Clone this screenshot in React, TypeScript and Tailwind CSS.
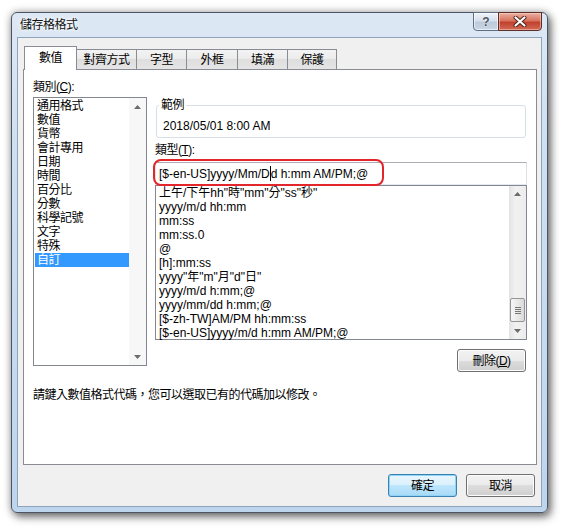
import { ReactElement } from 'react'

const categories = ['通用格式', '數值', '貨幣', '會計專用', '日期', '時間', '百分比', '分數', '科學記號', '文字', '特殊', '自訂']

const formats = [
  '上午/下午hh"時"mm"分"ss"秒"',
  'yyyy/m/d hh:mm',
  'mm:ss',
  'mm:ss.0',
  '@',
  '[h]:mm:ss',
  'yyyy"年"m"月"d"日"',
  'yyyy/m/d h:mm;@',
  'yyyy/mm/dd h:mm;@',
  '[$-zh-TW]AM/PM hh:mm:ss',
  '[$-en-US]yyyy/m/d h:mm AM/PM;@',
]

const tabs = [
  { label: '數值', w: 'w-[53px]' },
  { label: '對齊方式', w: 'w-[61px]' },
  { label: '字型', w: 'w-[51px]' },
  { label: '外框', w: 'w-[52px]' },
  { label: '填滿', w: 'w-[51px]' },
  { label: '保護', w: 'w-[50px]' },
]

function Arrow({ up }: { up?: boolean }): ReactElement {
  return (
    <svg width="7" height="4" viewBox="0 0 7 4">
      <path d={up ? 'M0 4 L3.5 0 L7 4 Z' : 'M0 0 L3.5 4 L7 0 Z'} fill="#6b6b6b" />
    </svg>
  )
}

function Button({ children, primary }: { children: React.ReactNode; primary?: boolean }): ReactElement {
  return (
    <div
      className={
        primary
          ? 'flex h-[23px] w-[69px] items-center justify-center rounded-[3px] border border-[#3c7fb1] bg-[linear-gradient(180deg,#eaf6fd_0%,#d9f0fc_50%,#bee6fd_50%,#a7d9f5_100%)] shadow-[inset_0_0_0_1px_#8fd3f7] tracking-[-0.5px]'
          : 'flex h-[23px] w-[69px] items-center justify-center rounded-[3px] border border-[#707070] bg-[linear-gradient(180deg,#f2f2f2_0%,#ebebeb_50%,#dddddd_50%,#cfcfcf_100%)] shadow-[inset_0_0_0_1px_#fcfcfc] tracking-[-0.5px]'
      }
    >
      {children}
    </div>
  )
}

function TitleBar(): ReactElement {
  return (
    <div className="flex h-[24px] items-center justify-between pl-[8px] pr-[5px]">
      <span className="text-[12px] tracking-[-0.5px] text-[#111] [text-shadow:0_0_5px_#fff,0_0_3px_#fff]">儲存格格式</span>
      <div className="-mt-px flex self-start">
        <div className="flex h-[19px] w-[26px] items-center justify-center rounded-bl-[4px] border border-[#5e6f84] bg-[linear-gradient(180deg,#eef3f8_0%,#d6e0eb_45%,#bccadb_55%,#c9d6e5_100%)] shadow-[inset_0_0_0_1px_rgba(255,255,255,0.6)]">
          <span className="text-[12px] font-bold leading-none text-[#4a5563] [text-shadow:0_0_2px_#fff]">?</span>
        </div>
        <div className="-ml-px flex h-[19px] w-[44px] items-center justify-center rounded-br-[4px] border border-[#5e2d26] bg-[linear-gradient(180deg,#eab1a3_0%,#d8735f_45%,#c0412d_55%,#d26a55_100%)] shadow-[inset_0_0_0_1px_rgba(255,220,210,0.5)]">
          <svg width="14" height="11" viewBox="0 0 14 11">
            <path d="M2.5 1.5 L11.5 9.5 M11.5 1.5 L2.5 9.5" stroke="#4a1f19" strokeWidth="4" strokeLinecap="round" />
            <path d="M2.5 1.5 L11.5 9.5 M11.5 1.5 L2.5 9.5" stroke="#ffffff" strokeWidth="2.2" strokeLinecap="round" />
          </svg>
        </div>
      </div>
    </div>
  )
}

function Tabs(): ReactElement {
  return (
    <div className="flex h-[23px] items-end pl-[1px]">
      {tabs.map((t, i) =>
        i === 0 ? (
          <div
            key={t.label}
            className="relative z-10 -mb-px flex h-[24px] w-[53px] items-center justify-center border border-b-0 border-[#898c95] bg-white pb-[1px] tracking-[-0.5px]"
          >
            {t.label}
          </div>
        ) : (
          <div
            key={t.label}
            className={`-ml-px flex h-[20px] ${t.w} items-center justify-center border border-b-0 border-[#898c95] bg-[linear-gradient(180deg,#f3f3f3_0%,#ebebeb_50%,#dedede_50%,#e5e5e5_100%)] tracking-[-0.5px]`}
          >
            {t.label}
          </div>
        ),
      )}
    </div>
  )
}

function CategoryList(): ReactElement {
  return (
    <div className="flex w-[114px] flex-col">
      <div className="h-[16px] leading-[16px] tracking-[-0.5px]">
        類別(<span className="underline">C</span>):
      </div>
      <div className="mt-[2px] flex h-[269px] border border-[#828790] bg-white">
        <div className="flex-1 pl-[1px] pt-[1px]">
          {categories.map((c) => (
            <div
              key={c}
              className={
                c === '自訂'
                  ? 'h-[14px] bg-[#3399ff] pl-[2px] leading-[14px] tracking-[-0.5px] text-white'
                  : 'h-[14px] pl-[2px] leading-[14px] tracking-[-0.5px]'
              }
            >
              {c}
            </div>
          ))}
        </div>
        <div className="flex w-[17px] flex-col justify-between bg-[#f7f7f7]">
          <div className="flex h-[17px] items-center justify-center">
            <Arrow up />
          </div>
          <div className="flex h-[17px] items-center justify-center">
            <Arrow />
          </div>
        </div>
      </div>
    </div>
  )
}

function FormatPane(): ReactElement {
  return (
    <div className="flex w-[372px] flex-col pt-[18px]">
      <fieldset className="mx-[1px] rounded-[3px] border border-[#d5dfe5] pl-[2px]">
        <legend className="px-[2px] leading-[16px] tracking-[-0.5px]">範例</legend>
        <div className="pb-[3px] pl-[4px] pt-[5px] leading-[16px]">2018/05/01 8:00 AM</div>
      </fieldset>
      <div className="mt-[4px] leading-[16px] tracking-[-0.5px]">
        類型(<span className="underline">T</span>):
      </div>
      <div className="relative mt-[4px] h-[23px] border border-[#abadb3] border-b-[#e3e9ef] border-l-[#e2e3ea] border-r-[#dbdfe6] bg-white">
        <div className="flex h-full items-center pl-[3px]">
          [$-en-US]yyyy/Mm/D
          <span className="inline-block h-[15px] w-px bg-black" />
          d h:mm AM/PM;@
        </div>
        <div className="absolute -left-[3px] -top-[4px] h-[27px] w-[231px] rounded-[8px] border-2 border-[#e3262b]" />
      </div>
      <div className="flex h-[155px] border border-[#828790] bg-white">
        <div className="flex-1 pl-[3px]">
          {formats.map((f) => (
            <div key={f} className="h-[14px] whitespace-nowrap leading-[14px]">
              {f}
            </div>
          ))}
        </div>
        <div className="flex w-[17px] flex-col bg-[linear-gradient(90deg,#e3e3e3_0%,#f2f2f2_40%,#ececec_100%)]">
          <div className="flex h-[17px] items-center justify-center">
            <Arrow up />
          </div>
          <div className="mx-[1px] mt-[95px] flex h-[25px] flex-col items-center justify-center gap-[1px] rounded-[2px] border border-[#959595] bg-[linear-gradient(90deg,#f6f6f6_0%,#e9e9e9_50%,#d9d9d9_100%)]">
            <div className="h-px w-[6px] bg-[#777]" />
            <div className="h-px w-[6px] bg-[#777]" />
            <div className="h-px w-[6px] bg-[#777]" />
            <div className="h-px w-[6px] bg-[#777]" />
          </div>
          <div className="mt-auto flex h-[17px] items-center justify-center">
            <Arrow />
          </div>
        </div>
      </div>
      <div className="mr-[1px] mt-[9px] self-end">
        <Button>
          刪除(<span className="underline">D</span>)
        </Button>
      </div>
    </div>
  )
}

export default function App(): ReactElement {
  return (
    <div className="h-[532px] w-[567px] overflow-hidden bg-white pl-[11px] pt-[12px] font-['Liberation_Sans','Noto_Sans_CJK_TC','Noto_Sans_CJK_SC',sans-serif] text-[12px] text-black">
      <div className="flex h-[501px] w-[537px] flex-col rounded-[6px] border border-[#4b5563] bg-[linear-gradient(180deg,#dde8f4_0%,#cfe0f1_25%,#bed5ee_100%)] shadow-[0_0_8px_rgba(0,0,0,0.3),3px_4px_9px_rgba(0,0,0,0.5)]">
        <TitleBar />
        <div className="mx-[5px] flex h-[470px] flex-col border border-[#8fa3bb] bg-[#f0f0f0] pb-[9px] pl-[5px] pr-[4px] pt-[8px]">
          <Tabs />
          <div className="flex h-[396px] flex-col border border-[#898c95] bg-white pl-[9px] pr-[8px] pt-[9px]">
            <div className="flex gap-[8px]">
              <CategoryList />
              <FormatPane />
            </div>
            <p className="mt-[15px] leading-[16px] tracking-[-0.5px]">請鍵入數值格式代碼，您可以選取已有的代碼加以修改。</p>
          </div>
          <div className="mt-[9px] flex justify-end gap-[9px] pr-[2px]">
            <Button primary>確定</Button>
            <Button>取消</Button>
          </div>
        </div>
      </div>
    </div>
  )
}
